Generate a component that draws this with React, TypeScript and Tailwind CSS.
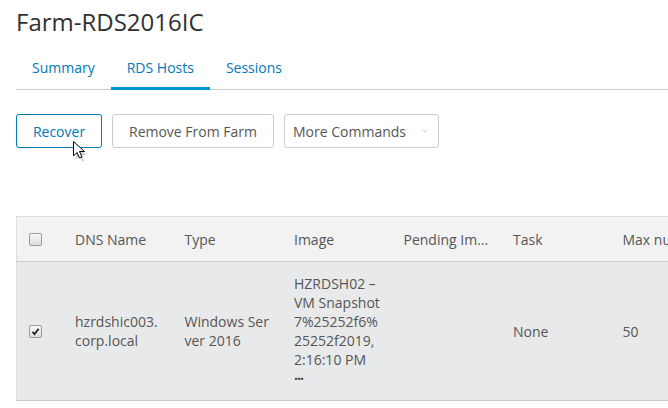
import { ChevronDown } from 'lucide-react';

const cols = ['DNS Name', 'Type', 'Image', 'Pending Im...', 'Task', 'Max nu'];

function Cursor() {
  return (
    <svg className="absolute left-[72px] top-[140px]" width="16" height="22" viewBox="0 0 16 22">
      <path d="M2.5 3.5 L2.5 18 L6 14.5 L8.5 20 L11 19 L8.5 13.5 L13.5 13.5 Z" fill="#888" opacity="0.35" transform="translate(1.5,1.5)" />
      <path d="M1.5 1.5 L1.5 16 L5 12.5 L7.5 18 L10 17 L7.5 11.5 L12.5 11.5 Z" fill="#fff" stroke="#000" strokeWidth="1" strokeLinejoin="round" />
    </svg>
  );
}

function Check({ checked }: { checked?: boolean }) {
  return (
    <div className="w-[13px] h-[13px] rounded-[2px] border border-[#9a9a9a] bg-gradient-to-b from-[#fafafa] to-[#dcdcdc] flex items-center justify-center">
      {checked && (
        <svg width="9" height="9" viewBox="0 0 9 9">
          <path d="M1.5 4.8 L3.6 7 L7.6 1.8" fill="none" stroke="#222" strokeWidth="1.8" />
        </svg>
      )}
    </div>
  );
}

export default function App() {
  return (
    <div className="relative w-[668px] h-[408px] overflow-hidden bg-white text-[#565656] font-['Open_Sans',sans-serif]">
      <h1 className="pl-[16px] pt-[6px] text-[24px] leading-[32px] text-[#313131]">Farm-RDS2016IC</h1>

      <div className="ml-[16px] mt-[19px] flex border-b border-[#cccccc] h-[33px]">
        <div className="px-[16px] text-[14px] text-[#0079b8] leading-[22px]">Summary</div>
        <div className="px-[16px] text-[14px] text-[#0079b8] leading-[22px] border-b-[3px] border-[#0094d2] -mb-px">RDS Hosts</div>
        <div className="px-[16px] text-[14px] text-[#0079b8] leading-[22px]">Sessions</div>
      </div>

      <div className="ml-[16px] mt-[24px] flex gap-[10px]">
        <button className="w-[86px] h-[34px] rounded-[3px] border border-[#0079b8] text-[14px] text-[#0079b8]">Recover</button>
        <button className="w-[162px] h-[34px] rounded-[3px] border border-[#cccccc] text-[14px] text-[#565656]">Remove From Farm</button>
        <button className="w-[155px] h-[34px] rounded-[3px] border border-[#cccccc] text-[14px] text-[#565656] flex items-center justify-between pl-[8px] pr-[8px]">
          <span>More Commands</span>
          <ChevronDown size={10} strokeWidth={1.5} color="#a0a8ad" />
        </button>
      </div>

      <div className="ml-[16px] mt-[68px] w-[700px] border-l border-t border-[#dddddd] text-[14px]">
        <div className="flex items-center h-[45px] bg-[#f2f2f2] border-b border-[#cccccc]">
          <div className="w-[42px] pl-[12px]"><Check /></div>
          {cols.map(c => (
            <div key={c} className="w-[109.5px] pl-[16px] whitespace-nowrap">{c}</div>
          ))}
        </div>
        <div className="flex items-center h-[139px] bg-[#e8e9ea] border-b border-[#cccccc] leading-[19px]">
          <div className="w-[42px] pl-[12px]"><Check checked /></div>
          <div className="w-[109.5px] pl-[16px]">hzrdshic003.<br />corp.local</div>
          <div className="w-[109.5px] pl-[16px]">Windows Ser<br />ver 2016</div>
          <div className="w-[109.5px] pl-[16px]">
            HZRDSH02 –<br />VM Snapshot<br />7%25252f6%<br />25252f2019,<br />2:16:10 PM
            <div className="font-bold tracking-[-1px] text-[#444]">···</div>
          </div>
          <div className="w-[109.5px] pl-[16px]"></div>
          <div className="w-[109.5px] pl-[16px]">None</div>
          <div className="w-[109.5px] pl-[16px]">50</div>
        </div>
      </div>

      <Cursor />
    </div>
  );
}
